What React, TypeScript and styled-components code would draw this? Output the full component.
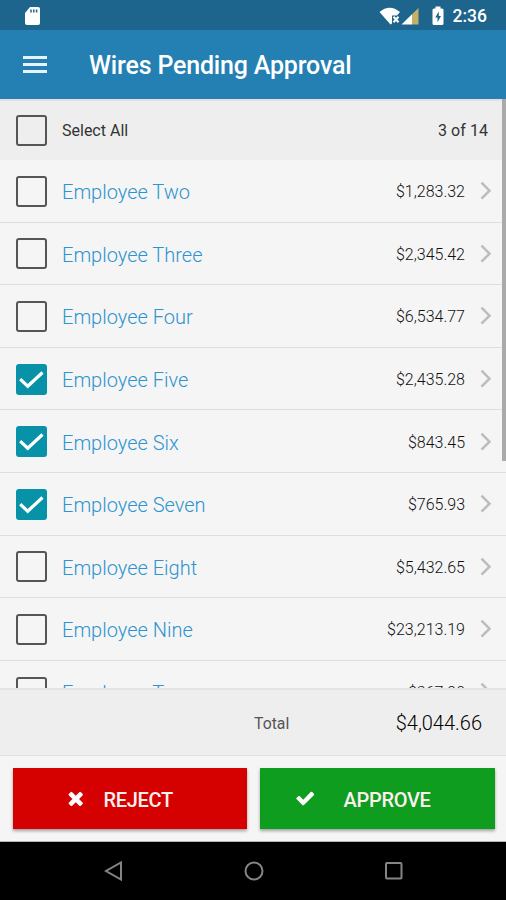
import React, { useState } from 'react';
import styled, { createGlobalStyle } from 'styled-components';

const GlobalStyle = createGlobalStyle`
  * { box-sizing: border-box; }
  body { margin: 0; background: #000; font-family: Roboto, "Liberation Sans", sans-serif; }
`;

const Screen = styled.div`
  width: 506px;
  height: 900px;
  display: flex;
  flex-direction: column;
  overflow: hidden;
  background: #f5f5f5;
`;

const StatusBar = styled.div`
  flex: none;
  height: 30px;
  display: flex;
  align-items: center;
  justify-content: space-between;
  padding: 1px 19px 0 24px;
  background: #1e658e;
  color: #fff;
`;

const StatusIcons = styled.div`
  display: flex;
  align-items: center;
`;

const Battery = styled.span`
  display: flex;
  margin: 0 9px 0 13px;
`;

const Clock = styled.span`
  font-size: 17.5px;
  font-weight: 500;
  line-height: 28px;
`;

const AppBar = styled.header`
  flex: none;
  height: 69px;
  display: flex;
  align-items: center;
  padding: 3px 23px 0;
  background: #247fb3;
  color: #fff;
`;

const MenuButton = styled.button`
  width: 24px;
  height: 17px;
  margin-top: -3px;
  padding: 0;
  border: 0;
  background: none;
  display: flex;
  flex-direction: column;
  justify-content: space-between;
`;

const MenuLine = styled.span`
  width: 24px;
  height: 3px;
  background: #e6f3fb;
`;

const Title = styled.h1`
  margin: 0 0 0 42px;
  font-size: 25px;
  font-weight: 500;
  letter-spacing: -0.18px;
  line-height: 36px;
  white-space: nowrap;
`;

const ListArea = styled.main`
  position: relative;
  flex: none;
  height: 589px;
  overflow: hidden;
`;

const ScrollThumb = styled.div`
  position: absolute;
  top: 0;
  right: 0;
  width: 4px;
  height: 362px;
  background: #aaa;
`;

const SelectAllRow = styled.div`
  height: 61px;
  display: flex;
  align-items: center;
  padding: 0 18px 0 16px;
  background: #eee;
  border-top: 2px solid #e3e0e0;
  color: #333;
  font-size: 16px;
`;

const Row = styled.div`
  height: 62.6px;
  display: flex;
  align-items: center;
  padding: 1px 14px 0 16px;
  border-bottom: 1.5px solid #dedede;
`;

const CheckBox = styled.button<{ $checked?: boolean }>`
  flex: none;
  width: 31px;
  height: 31px;
  margin-right: 15px;
  padding: 0;
  display: flex;
  align-items: center;
  justify-content: center;
  border: 2px solid ${(p) => (p.$checked ? '#0892a7' : '#555')};
  border-radius: 3px;
  background: ${(p) => (p.$checked ? '#0892a7' : 'transparent')};
`;

const SelectLabel = styled.span`
  flex: 1;
`;

const Count = styled.span`
  letter-spacing: 0.05px;
`;

const Name = styled.span`
  flex: 1;
  padding-top: 2px;
  font-size: 20px;
  font-weight: 300;
  color: #2e93cf;
`;

const Amount = styled.span`
  margin-right: 15px;
  padding-top: 1px;
  font-size: 16px;
  font-weight: 300;
  color: #111;
`;

const TotalBar = styled.div`
  flex: none;
  height: 68px;
  display: flex;
  align-items: center;
  padding: 1px 24px 0 254px;
  background: #eee;
  border-top: 2px solid #e3e3e3;
  border-bottom: 1px solid #e2e2e2;
`;

const TotalLabel = styled.span`
  flex: 1;
  font-size: 15.8px;
  color: #555;
`;

const TotalValue = styled.span`
  font-size: 20px;
  font-weight: 300;
  color: #000;
`;

const Actions = styled.div`
  flex: none;
  height: 86px;
  display: flex;
  gap: 13px;
  padding: 12px 11px 0 12.5px;
  border-bottom: 1px solid #b5b5b5;
`;

const ActionButton = styled.button<{ $bg: string; $inset: number; $gap: number }>`
  width: 234.5px;
  height: 61px;
  padding: 2px 0 0 ${(p) => p.$inset}px;
  display: flex;
  align-items: center;
  gap: ${(p) => p.$gap}px;
  border: 0;
  background: ${(p) => p.$bg};
  box-shadow: 0 2px 3px rgba(0, 0, 0, 0.35);
  color: #fff;
  font-family: inherit;
  font-size: 20px;
  font-weight: 500;
`;

const ActionLabel = styled.span`
  letter-spacing: -0.3px;
  color: #fbf0ee;
`;

const NavBar = styled.nav`
  flex: 1;
  display: flex;
  align-items: center;
  gap: 120px;
  padding-left: 104px;
  background: #000;
`;

const SdCardIcon = () => (
  <svg width="17" height="20" viewBox="0 0 17 20">
    <path d="M6 1h8q2 0 2 2v14q0 2-2 2H3q-2 0-2-2V7z" fill="#fff" />
    <path d="M7 3.500v3M9.800 3.500v3M12.600 3.500v3" stroke="#1e658e" strokeWidth="1.500" />
  </svg>
);

const WifiIcon = () => (
  <svg width="22" height="18" viewBox="0 0 22 18">
    <path d="M0.500 5Q10.500-3.500 21 5L18 8.500H13v8L11.500 17.500z" fill="#fff" />
    <path d="M14.500 9.800l5 5.400M19.500 9.800l-5 5.400" stroke="#fff" strokeWidth="2" />
  </svg>
);

const SignalIcon = () => (
  <svg width="18" height="18" viewBox="0 0 18 18">
    <path d="M0.500 17.500L11 7.200V17.500z" fill="#fff" />
    <path d="M11 7.200L17.500 1v16.500H11z" fill="#c5b067" />
  </svg>
);

const BatteryIcon = () => (
  <svg width="12" height="20" viewBox="0 0 12 20">
    <path d="M3.500 .5h5v2H10q1.500 0 1.500 1.500v13.500Q11.500 19 10 19H2Q.5 19 .5 17.500V4Q.5 2.500 2 2.500h1.500z" fill="#fff" />
    <path d="M6.800 5.500L3.200 11.500h2.300v4.700L9 10H6.800z" fill="#1e658e" />
  </svg>
);

const CheckMark = () => (
  <svg width="27" height="27" viewBox="0 0 27 27">
    <path d="M2.200 13.200L9.700 20.200L24.500 6.500" fill="none" stroke="#fff" strokeWidth="3.200" />
  </svg>
);

const Chevron = () => (
  <svg width="12" height="20" viewBox="0 0 12 20">
    <path d="M1.500 1.700L9.500 9.700L1.500 17.700" fill="none" stroke="#bcbcbc" strokeWidth="2.500" />
  </svg>
);

const CrossGlyph = () => (
  <svg width="21.500" height="21.500" viewBox="0 132 1792 1792">
    <path fill="#fff" d="M1490 1322q0 40-28 68l-136 136q-28 28-68 28t-68-28l-294-294-294 294q-28 28-68 28t-68-28l-136-136q-28-28-28-68t28-68l294-294-294-294q-28-28-28-68t28-68l136-136q28-28 68-28t68 28l294 294 294-294q28-28 68-28t68 28l136 136q28 28 28 68t-28 68l-294 294 294 294q28 28 28 68z" />
  </svg>
);

const TickGlyph = () => (
  <svg width="20.500" height="20.500" viewBox="0 90 1792 1792">
    <path fill="#fff" d="M1671 566q0 40-28 68l-724 724-136 136q-28 28-68 28t-68-28l-136-136-362-362q-28-28-28-68t28-68l136-136q28-28 68-28t68 28l294 295 656-657q28-28 68-28t68 28l136 136q28 28 28 68z" />
  </svg>
);

const wires = [
  { name: 'Employee Two', amount: '$1,283.32' },
  { name: 'Employee Three', amount: '$2,345.42' },
  { name: 'Employee Four', amount: '$6,534.77' },
  { name: 'Employee Five', amount: '$2,435.28' },
  { name: 'Employee Six', amount: '$843.45' },
  { name: 'Employee Seven', amount: '$765.93' },
  { name: 'Employee Eight', amount: '$5,432.65' },
  { name: 'Employee Nine', amount: '$23,213.19' },
  { name: 'Employee Ten', amount: '$367.90' },
];

export default function App() {
  const [selected, setSelected] = useState([3, 4, 5]);
  const toggle = (i: number) =>
    setSelected((s) => (s.includes(i) ? s.filter((n) => n !== i) : [...s, i]));

  return (
    <>
      <GlobalStyle />
      <Screen>
        <StatusBar>
          <SdCardIcon />
          <StatusIcons>
            <WifiIcon />
            <SignalIcon />
            <Battery>
              <BatteryIcon />
            </Battery>
            <Clock>2:36</Clock>
          </StatusIcons>
        </StatusBar>
        <AppBar>
          <MenuButton aria-label="Menu">
            <MenuLine />
            <MenuLine />
            <MenuLine />
          </MenuButton>
          <Title>Wires Pending Approval</Title>
        </AppBar>
        <ListArea>
          <SelectAllRow>
            <CheckBox aria-label="Select all" />
            <SelectLabel>Select All</SelectLabel>
            <Count>{selected.length} of 14</Count>
          </SelectAllRow>
          {wires.map((w, i) => (
            <Row key={w.name}>
              <CheckBox $checked={selected.includes(i)} onClick={() => toggle(i)} aria-label={w.name}>
                {selected.includes(i) && <CheckMark />}
              </CheckBox>
              <Name>{w.name}</Name>
              <Amount>{w.amount}</Amount>
              <Chevron />
            </Row>
          ))}
          <ScrollThumb />
        </ListArea>
        <TotalBar>
          <TotalLabel>Total</TotalLabel>
          <TotalValue>$4,044.66</TotalValue>
        </TotalBar>
        <Actions>
          <ActionButton $bg="#d50000" $inset={52} $gap={17.5}>
            <CrossGlyph />
            <ActionLabel>REJECT</ActionLabel>
          </ActionButton>
          <ActionButton $bg="#0f9d1f" $inset={35} $gap={28}>
            <TickGlyph />
            <ActionLabel>APPROVE</ActionLabel>
          </ActionButton>
        </Actions>
        <NavBar>
          <svg width="20" height="20" viewBox="0 0 20 20">
            <path d="M17 1.500v17L2 10z" fill="none" stroke="#858585" strokeWidth="2" />
          </svg>
          <svg width="20" height="20" viewBox="0 0 20 20">
            <circle cx="10" cy="10" r="8.500" fill="none" stroke="#858585" strokeWidth="2" />
          </svg>
          <svg width="20" height="20" viewBox="0 0 20 20">
            <rect x="2" y="2" width="15.500" height="15.500" rx="1" fill="none" stroke="#858585" strokeWidth="2" />
          </svg>
        </NavBar>
      </Screen>
    </>
  );
}
